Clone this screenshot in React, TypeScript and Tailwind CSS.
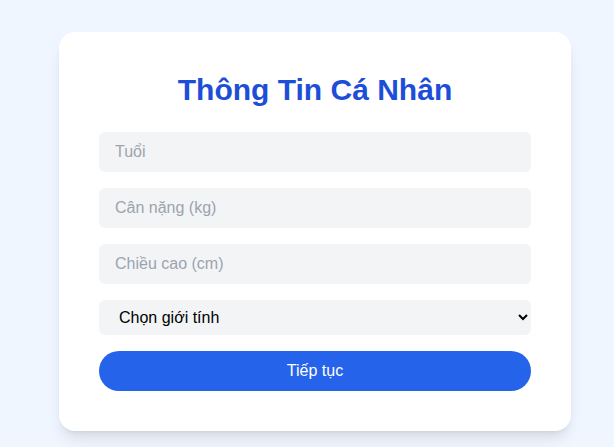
import React, { useState } from "react";

const App = () => {
  const [gender, setGender] = useState("");

  return (
    <div
      className="min-h-screen bg-[#eff6ff] pt-[32px] pl-4 flex justify-center items-start"
      style={{ fontFamily: '"Liberation Sans", Arial, sans-serif' }}
    >
      <div className="w-[512px] bg-white rounded-2xl shadow-lg p-10">
        <h1 className="text-3xl font-bold text-[#1d4ed8] text-center mb-6">
          Thông Tin Cá Nhân
        </h1>
        <form className="flex flex-col gap-4" onSubmit={(e) => e.preventDefault()}>
          <input
            type="number"
            placeholder="Tuổi"
            className="w-full bg-[#f3f4f6] rounded-md px-4 py-2 text-base outline-none placeholder:text-[#9ca3af]"
          />
          <input
            type="number"
            placeholder="Cân nặng (kg)"
            className="w-full bg-[#f3f4f6] rounded-md px-4 py-2 text-base outline-none placeholder:text-[#9ca3af]"
          />
          <input
            type="number"
            placeholder="Chiều cao (cm)"
            className="w-full bg-[#f3f4f6] rounded-md px-4 py-2 text-base outline-none placeholder:text-[#9ca3af]"
          />
          <select
            value={gender}
            onChange={(e) => setGender(e.target.value)}
            className="w-full bg-[#f3f4f6] rounded-md px-4 py-2 text-base text-black outline-none"
          >
            <option value="">Chọn giới tính</option>
            <option value="male">Nam</option>
            <option value="female">Nữ</option>
          </select>
          <button
            type="submit"
            className="w-full bg-[#2563eb] text-white rounded-full py-2 h-10 text-base"
          >
            Tiếp tục
          </button>
        </form>
      </div>
    </div>
  );
};

export default App;
